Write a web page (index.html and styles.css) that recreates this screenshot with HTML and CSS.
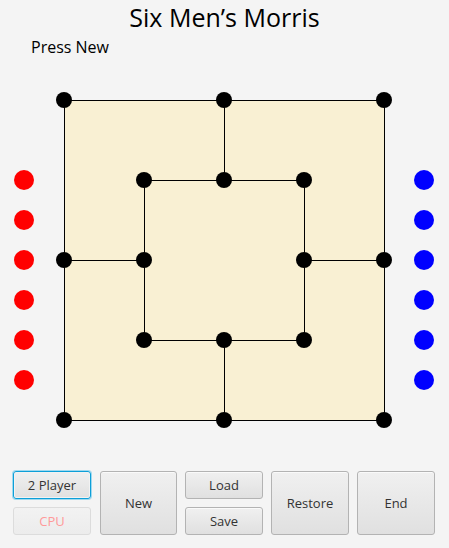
FILE: index.html
```html
<!DOCTYPE html>
<html>
<head>
<meta charset="utf-8">
<link rel="stylesheet" href="styles.css">
</head>
<body>
<div class="app">
  <h1 class="title">Six Men’s Morris</h1>
  <div class="status">Press New</div>
  <div class="play">
    <div class="pieces red">
      <span class="piece"></span><span class="piece"></span><span class="piece"></span>
      <span class="piece"></span><span class="piece"></span><span class="piece"></span>
    </div>
    <svg class="board" width="352" height="352" viewBox="0 0 352 352">
      <rect x="16.5" y="16.5" width="320" height="320" fill="#f9f0d3" stroke="#000" stroke-width="1"/>
      <rect x="96.5" y="96.5" width="160" height="160" fill="none" stroke="#000" stroke-width="1"/>
      <line x1="176.5" y1="16" x2="176.5" y2="96" stroke="#000"/>
      <line x1="176.5" y1="256" x2="176.5" y2="336" stroke="#000"/>
      <line x1="16" y1="176.5" x2="96" y2="176.5" stroke="#000"/>
      <line x1="256" y1="176.5" x2="336" y2="176.5" stroke="#000"/>
      <g fill="#000">
        <circle cx="16" cy="16" r="8"/><circle cx="176" cy="16" r="8"/><circle cx="336" cy="16" r="8"/>
        <circle cx="96" cy="96" r="8"/><circle cx="176" cy="96" r="8"/><circle cx="256" cy="96" r="8"/>
        <circle cx="16" cy="176" r="8"/><circle cx="96" cy="176" r="8"/><circle cx="256" cy="176" r="8"/><circle cx="336" cy="176" r="8"/>
        <circle cx="96" cy="256" r="8"/><circle cx="176" cy="256" r="8"/><circle cx="256" cy="256" r="8"/>
        <circle cx="16" cy="336" r="8"/><circle cx="176" cy="336" r="8"/><circle cx="336" cy="336" r="8"/>
      </g>
    </svg>
    <div class="pieces blue">
      <span class="piece"></span><span class="piece"></span><span class="piece"></span>
      <span class="piece"></span><span class="piece"></span><span class="piece"></span>
    </div>
  </div>
  <div class="controls">
    <div class="stack">
      <button class="btn focused">2 Player</button>
      <button class="btn disabled">CPU</button>
    </div>
    <button class="btn tall">New</button>
    <div class="stack">
      <button class="btn">Load</button>
      <button class="btn">Save</button>
    </div>
    <button class="btn tall">Restore</button>
    <button class="btn tall">End</button>
  </div>
</div>
</body>
</html>
```

FILE: styles.css
```css
html, body {
  margin: 0;
  padding: 0;
  background: #f4f4f4;
}
body {
  width: 449px;
  height: 548px;
  overflow: hidden;
  font-family: "Open Sans", "Noto Sans", sans-serif;
  color: #000;
}
.app {
  display: flex;
  flex-direction: column;
}
.title {
  margin: 0;
  font-size: 25px;
  font-weight: normal;
  line-height: 34px;
  height: 34px;
  text-align: center;
}
.status {
  font-size: 16px;
  line-height: 26px;
  height: 26px;
  padding-left: 31px;
}
.play {
  display: flex;
  margin-top: 24px;
  height: 352px;
}
.pieces {
  width: 48px;
  display: flex;
  flex-direction: column;
  align-items: center;
  padding-top: 86px;
  gap: 20px;
  box-sizing: border-box;
}
.piece {
  display: block;
  width: 20px;
  height: 20px;
  border-radius: 50%;
}
.red .piece { background: #ff0000; }
.blue .piece { background: #0000ff; }
.board {
  display: block;
}
.controls {
  display: grid;
  grid-template-columns: 79px 77px 78px 78px 78px;
  column-gap: 8px;
  padding-left: 13px;
  margin-top: 35px;
  height: 64px;
}
.stack {
  display: flex;
  flex-direction: column;
  gap: 8px;
}
.btn {
  font-family: "Open Sans", "Noto Sans", sans-serif;
  font-size: 13px;
  color: #333;
  width: 78px;
  height: 28px;
  padding: 0;
  border: 1px solid #b3b3b3;
  border-radius: 3px;
  background: linear-gradient(#f0f0f0, #e0e0e0);
  box-shadow: inset 0 1px 0 #fafafa;
}
.btn.tall {
  height: 64px;
  width: 100%;
}
.btn.focused {
  border-color: #0d9fd8;
  box-shadow: 0 0 0 1px #9fd9ef, inset 0 0 0 1px #f2f2f2;
}
.btn.disabled {
  color: #ff9a9a;
  border-color: #dcdcdc;
  background: linear-gradient(#f2f2f2, #ececec);
  box-shadow: none;
}
```
